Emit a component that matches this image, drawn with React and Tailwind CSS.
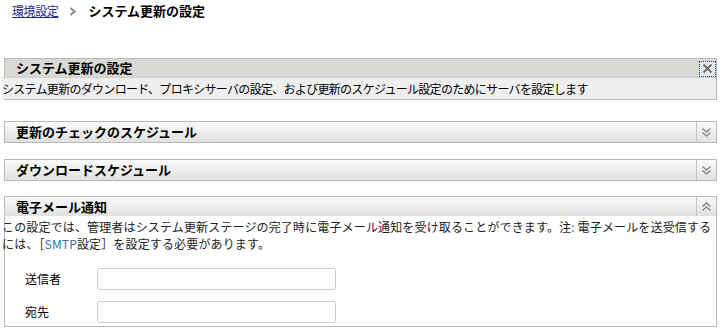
import React from 'react';

const DoubleChevron = ({ up }) => (
  <svg width="11" height="11" viewBox="0 0 11 11" className={up ? 'rotate-180' : ''}>
    <path d="M1.5 1.5 L5.5 5 L9.5 1.5" fill="none" stroke="#8a8a8a" strokeWidth="1.6" />
    <path d="M1.5 5.5 L5.5 9 L9.5 5.5" fill="none" stroke="#8a8a8a" strokeWidth="1.6" />
  </svg>
);

const CollapsedPanel = ({ title, up, className }) => (
  <div className={`flex h-[22px] border border-[#b9b9b9] bg-gradient-to-b from-[#fbfbfb] to-[#e0e0de] ${className}`}>
    <div className="flex-1 flex items-center pl-[11px] text-[13px] font-bold text-black">{title}</div>
    <div className="w-[20px] flex items-center justify-center border-l border-[#c4c4c4]">
      <DoubleChevron up={up} />
    </div>
  </div>
);

const App = () => {
  return (
    <div
      className="w-[723px] h-[333px] bg-white overflow-hidden text-black"
      style={{ fontFamily: '"Noto Sans CJK JP", "Noto Sans", sans-serif' }}
    >
      {/* breadcrumb */}
      <div className="h-[22px] flex items-center pl-[12px] text-[12px]">
        <a href="#" className="text-[#1a2d8c] underline tracking-[-0.4px]">環境設定</a>
        <svg width="8" height="9" viewBox="0 0 8 9" className="ml-[11px] mr-[11px]">
          <path d="M1.5 1 L5.5 4.5 L1.5 8" fill="none" stroke="#8c8c8c" strokeWidth="2.2" />
        </svg>
        <span className="font-bold text-[13px]">システム更新の設定</span>
      </div>

      <div className="ml-1 w-[713px] mt-[36px] flex flex-col">
        {/* system update settings */}
        <div className="border border-[#b9b9b9]">
          <div className="h-[18px] bg-[#d9dad5] flex items-center justify-between">
            <span className="pl-[11px] text-[13px] font-bold">システム更新の設定</span>
            <button className="w-[17px] h-[16px] mt-[1px] flex items-center justify-center bg-[#e9e9e9] border border-dotted border-[#1b3aa8]">
              <svg width="11" height="11" viewBox="0 0 11 11">
                <path d="M1.5 1.5 L9.5 9.5 M9.5 1.5 L1.5 9.5" stroke="#6e6e6e" strokeWidth="2" />
              </svg>
            </button>
          </div>
          <div className="h-[22px] bg-[#efefef] border-t border-[#d0d0d0] flex items-center text-[12px] -ml-[3px] tracking-[-0.7px] whitespace-nowrap">
            システム更新のダウンロード、プロキシサーバの設定、および更新のスケジュール設定のためにサーバを設定します
          </div>
        </div>

        <CollapsedPanel title="更新のチェックのスケジュール" className="mt-[21px]" />
        <CollapsedPanel title="ダウンロードスケジュール" className="mt-[16px]" />

        {/* email notification */}
        <div className="mt-[15px] border border-[#b9b9b9] h-[131px]">
          <div className="flex h-[19px] bg-gradient-to-b from-[#fbfbfb] to-[#e0e0de]">
            <div className="flex-1 flex items-center pl-[11px] text-[13px] font-bold">電子メール通知</div>
            <div className="w-[20px] flex items-center justify-center border-l border-[#c4c4c4]">
              <DoubleChevron up />
            </div>
          </div>
          <div className="-ml-[3px] pt-[2px] text-[12px] leading-[17px] whitespace-nowrap tracking-[0.15px] text-[#222]">
            この設定では、管理者はシステム更新ステージの完了時に電子メール通知を受け取ることができます。注<span className="text-[#3a6fb0]">:</span> 電子メールを送受信する
            <br />
            には、［<span className="text-[#3a6fb0]">SMTP</span>設定］を設定する必要があります。
          </div>
          <div className="mt-[16px] flex flex-col gap-[11px] text-[12px]">
            <div className="flex items-center">
              <span className="w-[92px] pl-[20px]">送信者</span>
              <input className="w-[239px] h-[22px] border border-[#cfcfcf] rounded-[2px]" />
            </div>
            <div className="flex items-center">
              <span className="w-[92px] pl-[20px]">宛先</span>
              <input className="w-[239px] h-[22px] border border-[#cfcfcf] rounded-[2px]" />
            </div>
          </div>
        </div>
      </div>
    </div>
  );
};

export default App;
